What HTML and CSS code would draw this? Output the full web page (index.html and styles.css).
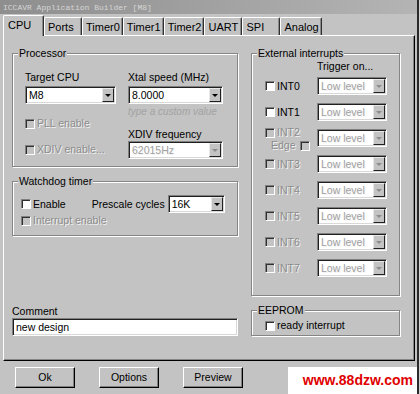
FILE: index.html
```html
<!DOCTYPE html>
<html lang="en">
<head>
    <meta charset="UTF-8">
    <title>ICCAVR Application Builder</title>
    <link rel="stylesheet" href="styles.css">
</head>
<body>
<div class="window">
    <div class="titlebar">ICCAVR Application Builder [M8]</div>
    <div class="tabs">
        <div class="tab active">CPU</div>
        <div class="tab">Ports</div>
        <div class="tab">Timer0</div>
        <div class="tab">Timer1</div>
        <div class="tab">Timer2</div>
        <div class="tab">UART</div>
        <div class="tab">SPI</div>
        <div class="tab">Analog</div>
    </div>
    <div class="panel">
        <div class="col-left">
            <fieldset class="group processor">
                <legend>Processor</legend>
                <div class="proc-grid">
                    <div class="stack narrow">
                        <div class="lbl">Target CPU</div>
                        <div class="combo"><span class="value">M8</span><span class="drop"></span></div>
                        <div class="check-row off pll"><span class="check"></span>PLL enable</div>
                        <div class="check-row off xdiv-en"><span class="check"></span>XDIV enable...</div>
                    </div>
                    <div class="stack wide">
                        <div class="lbl">Xtal speed (MHz)</div>
                        <div class="combo"><span class="value">8.0000</span><span class="drop"></span></div>
                        <div class="hint">type a custom value</div>
                        <div class="lbl xdiv-lbl">XDIV frequency</div>
                        <div class="combo off"><span class="value">62015Hz</span><span class="drop"></span></div>
                    </div>
                </div>
            </fieldset>
            <fieldset class="group watchdog">
                <legend>Watchdog timer</legend>
                <div class="wd-row">
                    <div class="check-row"><span class="check"></span>Enable</div>
                    <span class="prescale">Prescale cycles</span>
                    <div class="combo wd-combo"><span class="value">16K</span><span class="drop"></span></div>
                </div>
                <div class="check-row off wd-int"><span class="check"></span>Interrupt enable</div>
            </fieldset>
            <div class="comment">
                <div class="lbl">Comment</div>
                <div class="textbox">new design</div>
            </div>
        </div>
        <div class="col-right">
            <fieldset class="group ext">
                <legend>External interrupts</legend>
                <div class="trigger">Trigger on...</div>
                <div class="int-list">
                    <div class="int-row">
                        <div class="int-name"><div class="check-row"><span class="check"></span>INT0</div></div>
                        <div class="combo off int-combo"><span class="value">Low level</span><span class="drop"></span></div>
                    </div>
                    <div class="int-row">
                        <div class="int-name"><div class="check-row"><span class="check"></span>INT1</div></div>
                        <div class="combo off int-combo"><span class="value">Low level</span><span class="drop"></span></div>
                    </div>
                    <div class="int-row">
                        <div class="int-name two-line">
                            <div class="check-row off"><span class="check"></span>INT2</div>
                            <div class="check-row off edge">Edge<span class="check"></span></div>
                        </div>
                        <div class="combo off int-combo"><span class="value">Low level</span><span class="drop"></span></div>
                    </div>
                    <div class="int-row">
                        <div class="int-name"><div class="check-row off"><span class="check"></span>INT3</div></div>
                        <div class="combo off int-combo"><span class="value">Low level</span><span class="drop"></span></div>
                    </div>
                    <div class="int-row">
                        <div class="int-name"><div class="check-row off"><span class="check"></span>INT4</div></div>
                        <div class="combo off int-combo"><span class="value">Low level</span><span class="drop"></span></div>
                    </div>
                    <div class="int-row">
                        <div class="int-name"><div class="check-row off"><span class="check"></span>INT5</div></div>
                        <div class="combo off int-combo"><span class="value">Low level</span><span class="drop"></span></div>
                    </div>
                    <div class="int-row">
                        <div class="int-name"><div class="check-row off"><span class="check"></span>INT6</div></div>
                        <div class="combo off int-combo"><span class="value">Low level</span><span class="drop"></span></div>
                    </div>
                    <div class="int-row">
                        <div class="int-name"><div class="check-row off"><span class="check"></span>INT7</div></div>
                        <div class="combo off int-combo"><span class="value">Low level</span><span class="drop"></span></div>
                    </div>
                </div>
            </fieldset>
            <fieldset class="group eeprom">
                <legend>EEPROM</legend>
                <div class="check-row"><span class="check"></span>ready interrupt</div>
            </fieldset>
        </div>
    </div>
    <div class="footer">
        <div class="btn">Ok</div>
        <div class="btn">Options</div>
        <div class="btn">Preview</div>
        <div class="watermark">www.88dzw.com</div>
    </div>
</div>
</body>
</html>
```

FILE: styles.css
```css
* {
    box-sizing: border-box;
}
body {
    margin: 0;
    background-color: #d2d2d2;
    font-family: "Liberation Sans", Arial, sans-serif;
    font-size: 10.5px;
    line-height: 13px;
    color: #000;
}
.window {
    width: 419px;
    height: 394px;
    display: flex;
    flex-direction: column;
    background-color: #c3c3c3;
    border-right: 2px solid #2a2a2a;
    overflow: hidden;
}
.titlebar {
    height: 14px;
    padding: 3px 0 0 3px;
    background: linear-gradient(to right, #8e8e8e, #b4b4b4);
    color: #d6d6d6;
    font-family: "Liberation Mono", monospace;
    font-size: 8px;
    line-height: 10px;
}

/* tab strip */
.tabs {
    height: 21px;
    display: flex;
    align-items: flex-end;
    padding-left: 3px;
    font-size: 11px;
}
.tab {
    height: 18px;
    min-width: 38px;
    padding: 3px 2px 0 3px;
    border-top: 1px solid #fff;
    border-left: 1px solid #fff;
    border-right: 1px solid #303030;
    border-radius: 2px 2px 0 0;
    box-shadow: inset -1px 0 0 #8a8a8a;
    white-space: nowrap;
}
.tab.active {
    position: relative;
    z-index: 1;
    height: 21px;
    min-width: 41px;
    margin-bottom: -1px;
    padding-left: 4px;
    background-color: #c3c3c3;
}

.panel {
    width: 412px;
    height: 326px;
    margin-left: 3px;
    display: flex;
    gap: 13px;
    padding: 11px 0 24px 8px;
    border-top: 1px solid #fff;
    border-left: 1px solid #fff;
    border-right: 1px solid #000;
    border-bottom: 1px solid #000;
    box-shadow: inset -1px -1px 0 #858585;
}
.col-left {
    width: 226px;
    display: flex;
    flex-direction: column;
}
.col-right {
    width: 149px;
}

/* etched group boxes */
.group {
    margin: 0;
    min-width: 0;
    padding: 0 5px;
    border: 1px solid #858585;
    box-shadow: inset 1px 1px 0 #fff, 1px 1px 0 #fff;
}
.group legend {
    padding: 0 1px;
    background-color: #c3c3c3;
    line-height: 13px;
}

.processor {
    padding-top: 11px;
    padding-bottom: 7px;
}
.proc-grid {
    display: flex;
    gap: 12px;
    margin-left: 7px;
}
.stack {
    display: flex;
    flex-direction: column;
}
.stack.narrow {
    width: 91px;
}
.stack.wide {
    width: 95px;
}
.stack .combo {
    margin-top: 2px;
}
.pll {
    margin-top: 13px;
}
.xdiv-en {
    margin-top: 13px;
}
.hint {
    margin-top: 1px;
    color: #a2a2a2;
    font-style: italic;
    font-size: 10px;
    white-space: nowrap;
}
.xdiv-lbl {
    margin-top: 10px;
}
.stack .xdiv-lbl + .combo {
    margin-top: 0;
}

.watchdog {
    margin-top: 8px;
    padding-top: 7px;
    padding-bottom: 8px;
}
.wd-row {
    display: flex;
    align-items: center;
    margin-left: 3px;
}
.prescale {
    margin-left: 26px;
}
.wd-combo {
    width: 57px;
    margin-left: 3px;
}
.wd-int {
    margin-left: 3px;
    margin-top: 1px;
}

.comment {
    margin-top: auto;
}
.textbox {
    height: 18px;
    padding: 2px 3px;
    background-color: #fff;
    border: 1px solid;
    border-color: #808080 #fff #fff #808080;
    box-shadow: inset 1px 1px 0 #202020, inset -1px -1px 0 #d8d8d8;
}

/* combo boxes */
.combo {
    height: 18px;
    display: flex;
    padding: 1px;
    background-color: #fff;
    border: 1px solid;
    border-color: #808080 #fff #fff #808080;
    box-shadow: inset 1px 1px 0 #202020, inset -1px -1px 0 #d8d8d8;
}
.combo .value {
    flex: 1;
    padding-left: 2px;
    line-height: 14px;
    white-space: nowrap;
    overflow: hidden;
}
.combo .drop {
    width: 12px;
    display: flex;
    align-items: center;
    justify-content: center;
    background-color: #c3c3c3;
    border: 1px solid;
    border-color: #e8e8e8 #202020 #202020 #e8e8e8;
}
.combo .drop::after {
    content: "";
    border-left: 3px solid transparent;
    border-right: 3px solid transparent;
    border-top: 3px solid #000;
}
.combo.off .value {
    color: #a0a0a0;
}
.combo.off .drop::after {
    border-top-color: #8c8c8c;
}

/* check boxes */
.check-row {
    display: flex;
    align-items: center;
    height: 13px;
    white-space: nowrap;
}
.check {
    width: 10px;
    height: 10px;
    flex: none;
    margin-right: 2px;
    background-color: #fff;
    border: 1px solid;
    border-color: #808080 #fff #fff #808080;
    box-shadow: inset 1px 1px 0 #303030;
}
.off {
    color: #8c8c8c;
    text-shadow: 1px 1px 0 #f2f2f2;
}
.off .check {
    background-color: #c3c3c3;
}

/* external interrupts */
.ext {
    padding-bottom: 18px;
}
.trigger {
    margin-left: 60px;
}
.int-list {
    display: flex;
    flex-direction: column;
    gap: 8px;
    margin-top: 4px;
    margin-left: 8px;
}
.int-row {
    display: flex;
    align-items: center;
}
.int-name {
    width: 52px;
}
.int-name.two-line {
    align-self: flex-start;
    margin-top: -3px;
    margin-bottom: -5px;
}
.edge {
    margin-left: 6px;
}
.edge .check {
    margin-left: 4px;
}
.int-combo {
    width: 70px;
}

.eeprom {
    margin-top: 8px;
    padding-top: 2px;
    padding-bottom: 3px;
}
.eeprom .check-row {
    margin-left: 8px;
}

/* bottom buttons */
.footer {
    flex: 1;
    display: flex;
    align-items: flex-start;
    gap: 24px;
    padding: 6px 0 0 15px;
}
.btn {
    width: 60px;
    height: 21px;
    text-align: center;
    line-height: 19px;
    border: 1px solid;
    border-color: #fff #000 #000 #fff;
    box-shadow: inset -1px -1px 0 #808080;
}
.watermark {
    align-self: flex-end;
    width: 129px;
    height: 27px;
    margin-left: auto;
    padding-right: 4px;
    background-color: #fff;
    color: #e00000;
    font-size: 14px;
    font-weight: bold;
    line-height: 27px;
    text-align: right;
}
```
